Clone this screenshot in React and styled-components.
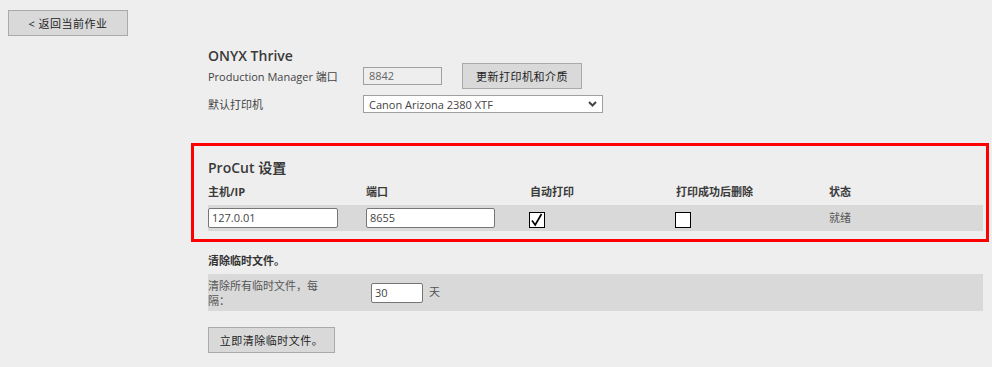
import React from 'react';
import styled, { createGlobalStyle } from 'styled-components';

const GlobalStyle = createGlobalStyle`
  body {
    margin: 0;
    background: #eeeeee;
    font-family: "Open Sans", "Noto Sans CJK SC", sans-serif;
    color: #444;
  }
`;

const Page = styled.div`
  width: 992px;
  height: 367px;
  overflow: hidden;
  padding-top: 10px;
  box-sizing: border-box;
`;

const Button = styled.button`
  display: flex;
  align-items: center;
  justify-content: center;
  height: 26px;
  width: ${p => p.$w}px;
  padding: 0;
  margin-left: ${p => p.$ml || 0}px;
  background: #d9d9d9;
  border: 1px solid #aaaaaa;
  font-family: inherit;
  font-size: 11px;
  color: #222;
  letter-spacing: 0.5px;
`;

const BackBar = styled.div`
  padding-left: 8px;
`;

const Content = styled.div`
  padding: 10px 9px 0 208px;
`;

const Title = styled.div`
  font-size: 14px;
  font-weight: 600;
  color: #3a3a3a;
  line-height: 19px;
  margin-bottom: ${p => p.$mb || 0}px;
`;

const FieldRow = styled.div`
  display: flex;
  align-items: center;
  height: 22px;
  margin-top: ${p => p.$mt || 0}px;
  font-size: 11px;
  color: #444;
`;

const FieldLabel = styled.span`
  width: 155px;
  flex-shrink: 0;
`;

const ReadInput = styled.div`
  width: 79px;
  height: 18px;
  box-sizing: border-box;
  border: 1px solid #a0a0a0;
  background: #eeeeee;
  color: #666;
  font-size: 11px;
  padding-left: 5px;
  line-height: 16px;
`;

const Select = styled.div`
  width: 240px;
  height: 18px;
  box-sizing: border-box;
  border: 1px solid #a0a0a0;
  background: #fff;
  display: flex;
  align-items: center;
  justify-content: space-between;
  padding: 0 5px 0 5px;
  color: #444;
  font-size: 11px;
`;

const RedBox = styled.div`
  margin: 28px -6px 0 -17px;
  border: 3px solid #ff0000;
  padding: 12px 3px 8px 14px;
`;

const ProGrid = styled.div`
  display: grid;
  grid-template-columns: 158px 164px 146px 153px 1fr;
`;

const HeadCell = styled.div`
  font-size: 11px;
  font-weight: 700;
  color: #3a3a3a;
  height: 22px;
  line-height: 18px;
`;

const BodyRow = styled.div`
  grid-column: 1 / -1;
  display: grid;
  grid-template-columns: subgrid;
  align-items: center;
  background: #d9d9d9;
  height: 26px;
`;

const TextInput = styled.div`
  width: ${p => p.$w}px;
  height: 20px;
  box-sizing: border-box;
  border: 1px solid #767676;
  border-radius: 2px;
  background: #fff;
  font-size: 11px;
  color: #444;
  padding-left: 3px;
  line-height: 18px;
`;

const Check = styled.div`
  width: 16px;
  height: 16px;
  box-sizing: border-box;
  border: 1px solid #000;
  background: #fff;
  margin: 4px 0 0 -1px;
  display: flex;
  align-items: center;
  justify-content: center;
`;

const Status = styled.div`
  font-size: 11px;
  color: #555;
  margin-top: -3px;
`;

const SubTitle = styled.div`
  font-size: 11px;
  font-weight: 700;
  color: #333;
  margin-top: 11px;
  line-height: 16px;
`;

const CleanRow = styled.div`
  margin-top: 5px;
  display: flex;
  align-items: center;
  background: #d9d9d9;
  height: 37px;
  font-size: 11px;
  color: #555;
`;

const CleanLabel = styled.div`
  width: 115px;
  line-height: 15px;
  margin-right: 48px;
`;

const Unit = styled.span`
  margin-left: 6px;
  margin-top: -4px;
`;

const ButtonBar = styled.div`
  margin-top: 16px;
`;

const Chevron = () => (
  <svg width="9" height="6" viewBox="0 0 9 6">
    <path d="M1 1 L4.5 4.5 L8 1" fill="none" stroke="#444" strokeWidth="2" />
  </svg>
);

const Tick = () => (
  <svg width="14" height="14" viewBox="0 0 14 14">
    <path d="M2 7.5 L5.2 12 L11.5 1" fill="none" stroke="#000" strokeWidth="1.7" />
  </svg>
);

export default function App() {
  return (
    <Page>
      <GlobalStyle />
      <BackBar>
        <Button $w={120}>&lt; 返回当前作业</Button>
      </BackBar>
      <Content>
        <Title>ONYX Thrive</Title>
        <FieldRow>
          <FieldLabel>Production Manager 端口</FieldLabel>
          <ReadInput>8842</ReadInput>
          <Button $w={120} $ml={20}>更新打印机和介质</Button>
        </FieldRow>
        <FieldRow $mt={6}>
          <FieldLabel>默认打印机</FieldLabel>
          <Select>
            Canon Arizona 2380 XTF
            <Chevron />
          </Select>
        </FieldRow>

        <RedBox>
          <Title $mb={6}>ProCut 设置</Title>
          <ProGrid>
            <HeadCell>主机/IP</HeadCell>
            <HeadCell>端口</HeadCell>
            <HeadCell>自动打印</HeadCell>
            <HeadCell>打印成功后删除</HeadCell>
            <HeadCell>状态</HeadCell>
            <BodyRow>
              <TextInput $w={130}>127.0.01</TextInput>
              <TextInput $w={129}>8655</TextInput>
              <Check><Tick /></Check>
              <Check />
              <Status>就绪</Status>
            </BodyRow>
          </ProGrid>
        </RedBox>

        <SubTitle>清除临时文件。</SubTitle>
        <CleanRow>
          <CleanLabel>清除所有临时文件，每隔：</CleanLabel>
          <TextInput $w={52}>30</TextInput>
          <Unit>天</Unit>
        </CleanRow>
        <ButtonBar>
          <Button $w={127}>立即清除临时文件。</Button>
        </ButtonBar>
      </Content>
    </Page>
  );
}
